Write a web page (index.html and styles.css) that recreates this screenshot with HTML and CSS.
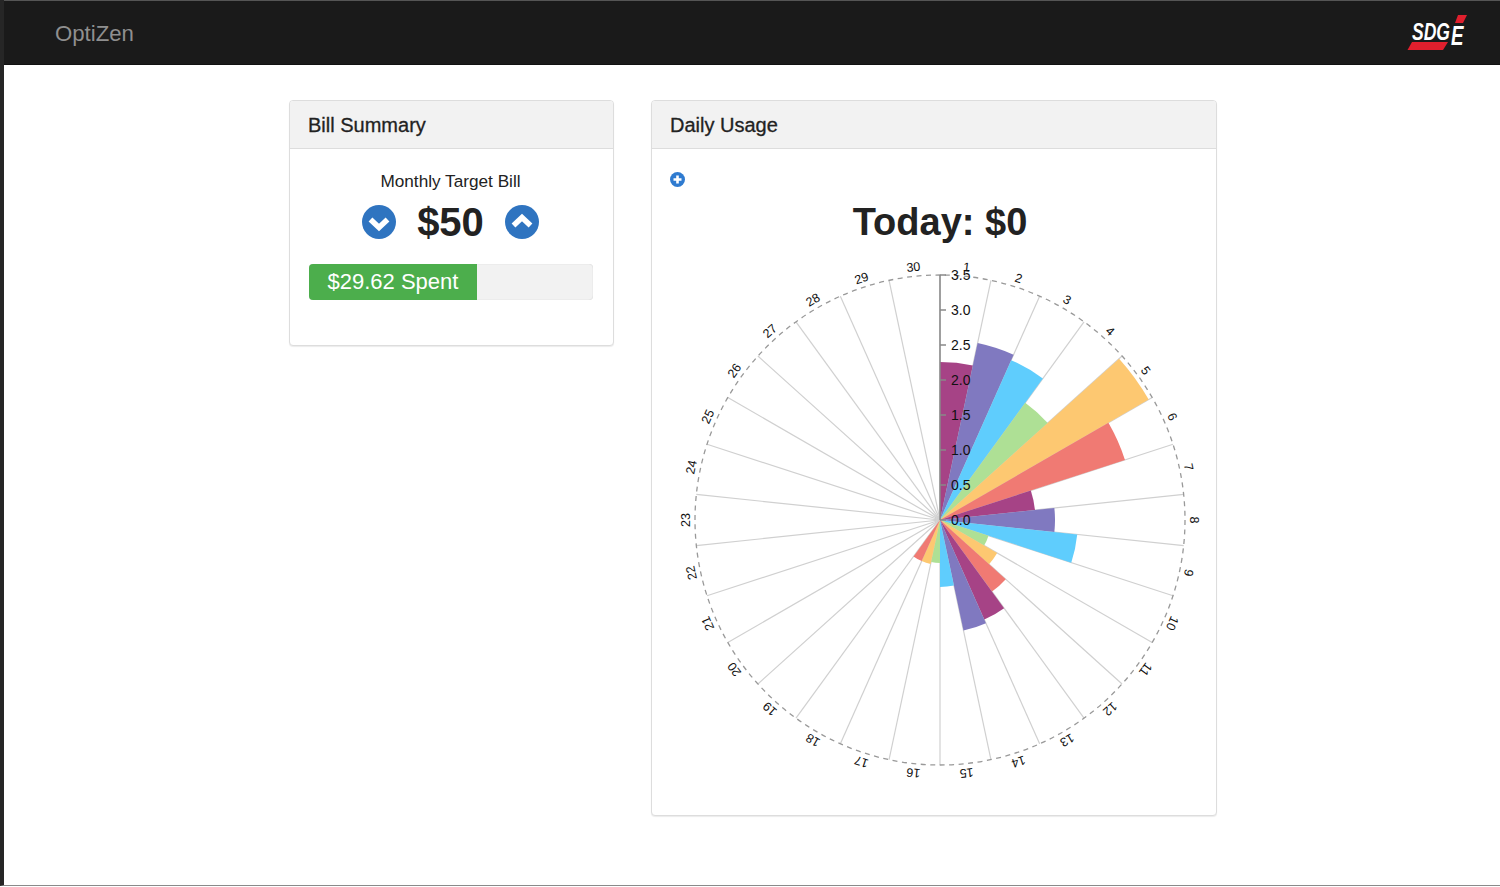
FILE: index.html
```html
<!DOCTYPE html>
<html lang="en">
<head>
    <meta charset="UTF-8">
    <meta name="viewport" content="width=device-width, initial-scale=1.0">
    <title>OptiZen</title>
    <link rel="stylesheet" href="styles.css">
</head>
<body>
    <div class="window">
        <nav class="navbar">
            <span class="brand">OptiZen</span>
            <svg class="logo" width="66" height="40" viewBox="0 0 66 40">
                <polygon class="logo-red" points="3.5,37 8,29 44,29 39,37" />
                <polygon class="logo-red" points="54,2 63,2 59,10 51,10" />
                <text class="logo-text" x="8" y="27" textLength="38" lengthAdjust="spacingAndGlyphs">SDG</text>
                <text class="logo-text logo-e" x="47" y="32" textLength="12.5" lengthAdjust="spacingAndGlyphs">E</text>
            </svg>
        </nav>

        <main class="content">
            <section class="panel panel-bill">
                <h3 class="panel-heading">Bill Summary</h3>
                <div class="panel-body bill-body">
                    <div class="target-label">Monthly Target Bill</div>
                    <div class="target-row">
                        <svg class="round-icon" width="34" height="34" viewBox="-17 -17 34 34">
                            <circle r="17" />
                            <path d="M-8.5 -2.5 L0 5.5 L8.5 -2.5" />
                        </svg>
                        <span class="target-amount">$50</span>
                        <svg class="round-icon" width="34" height="34" viewBox="-17 -17 34 34">
                            <circle r="17" />
                            <path d="M-8.5 3.5 L0 -4.5 L8.5 3.5" />
                        </svg>
                    </div>
                    <div class="progress">
                        <div class="progress-bar">$29.62 Spent</div>
                    </div>
                </div>
            </section>

            <section class="panel panel-usage">
                <h3 class="panel-heading">Daily Usage</h3>
                <div class="panel-body usage-body">
                    <svg class="plus-icon" width="15" height="15" viewBox="-7.5 -7.5 15 15">
                        <circle r="7.5" />
                        <path d="M-4 0 H4 M0 -4 V4" />
                    </svg>
                    <div class="usage-chart">
                        <h1 class="today">Today: $0</h1>
                        <svg id="polar" class="polar" width="540" height="540" viewBox="-270 -270 540 540"></svg>
                    </div>
                </div>
            </section>
        </main>
    </div>

    <script src="chart.js"></script>
</body>
</html>
```

FILE: styles.css
```css
html, body {
    margin: 0;
    background: white;
}

body {
    font-family: 'Liberation Sans', Arial, sans-serif;
    color: #222;
}

.window {
    box-sizing: border-box;
    height: 886px;
    overflow: hidden;
    border-left: 4px solid #262626;
    border-bottom: 1px solid #8a8a8a;
    background: white;
}

.navbar {
    box-sizing: border-box;
    height: 65px;
    display: flex;
    align-items: center;
    justify-content: space-between;
    padding: 0 30px 0 51px;
    background: #1a1a1a;
    border-top: 1px solid #555;
    border-bottom: 1px solid #111;
}

.brand {
    margin-top: 2px;
    color: #8f8f8f;
    font-size: 22.2px;
}

.logo-red {
    fill: #e01f2d;
}

.logo-text {
    fill: white;
    font-size: 23.7px;
    font-weight: bold;
    font-style: italic;
}

.logo-e {
    font-size: 27px;
}

.content {
    display: flex;
    align-items: flex-start;
    gap: 37px;
    padding: 35px 0 0 285px;
}

.panel {
    box-sizing: border-box;
    border: 1px solid #ddd;
    border-radius: 4px;
    box-shadow: 0 1px 1px rgba(0, 0, 0, 0.08);
    background: white;
}

.panel-bill {
    width: 325px;
    height: 246px;
}

.panel-usage {
    width: 566px;
    height: 716px;
}

.panel-heading {
    box-sizing: border-box;
    height: 48px;
    margin: 0;
    padding: 0 18px;
    line-height: 49px;
    font-size: 20px;
    font-weight: normal;
    -webkit-text-stroke: 0.3px #222;
    background: #f2f2f2;
    border-bottom: 1px solid #ddd;
    border-radius: 3px 3px 0 0;
}

.bill-body {
    padding: 22px 21px 0 19px;
    text-align: center;
}

.target-label {
    font-size: 17.2px;
    line-height: 20px;
}

.target-row {
    display: flex;
    align-items: center;
    justify-content: center;
    gap: 21px;
    margin-top: 8px;
    height: 46px;
}

.target-amount {
    font-size: 40px;
    font-weight: bold;
}

.round-icon circle {
    fill: #2f74c0;
}

.round-icon path {
    fill: none;
    stroke: white;
    stroke-width: 5.5;
}

.progress {
    height: 36px;
    margin: 19px -1px 0 0;
    background: #f2f2f2;
    border-radius: 4px;
    box-shadow: inset 0 0 1px rgba(0, 0, 0, 0.25);
    overflow: hidden;
}

.progress-bar {
    width: 168px;
    height: 36px;
    line-height: 36px;
    font-size: 22px;
    color: white;
    background: #4cae4c;
}

.usage-body {
    padding: 23px 0 0 18px;
}

.plus-icon {
    display: block;
}

.plus-icon circle {
    fill: #2f7bd0;
}

.plus-icon path {
    stroke: white;
    stroke-width: 2.6;
}

.usage-chart {
    width: 540px;
}

.today {
    margin: 0;
    height: 62px;
    padding-top: 12px;
    line-height: 46px;
    text-align: center;
    font-size: 38px;
    font-weight: bold;
    box-sizing: border-box;
}

.polar {
    display: block;
    margin-top: 1px;
}

.spoke {
    stroke: #d0d0d0;
    stroke-width: 1.2;
}

.rim {
    fill: none;
    stroke: #999;
    stroke-width: 1.3;
    stroke-dasharray: 5 4.5;
}

.axis {
    fill: none;
    stroke: #888;
    stroke-width: 1.5;
}

.day-label {
    font-size: 12.5px;
    fill: #111;
    text-anchor: middle;
    dominant-baseline: central;
}

.tick-label {
    font-size: 14px;
    fill: #111;
    dominant-baseline: central;
}
```

FILE: chart.js
```js
const svg = document.getElementById("polar");
const NS = "http://www.w3.org/2000/svg";
const R = 245;
const DAYS = 30;
const STEP = 360 / DAYS;

// outer radius of each day's wedge, in px, read off as usage * 70
const usage = [158, 181, 175, 145, 241, 194.5, 95.5, 115, 138, 51, 66, 88.5, 109, 113, 67, 43, 45, 45];
const colors = ["#a64386", "#8079c0", "#5fcdfd", "#aee095", "#fdc871", "#f07a73"];

function add(tag, attrs, text) {
    const el = document.createElementNS(NS, tag);
    for (const k in attrs) el.setAttribute(k, attrs[k]);
    if (text) el.textContent = text;
    svg.appendChild(el);
    return el;
}

function point(r, deg) {
    const a = deg * Math.PI / 180;
    return [(r * Math.sin(a)).toFixed(2), (-r * Math.cos(a)).toFixed(2)];
}

for (let i = 0; i < DAYS; i++) {
    const [x, y] = point(R, i * STEP);
    add("line", { class: "spoke", x1: 0, y1: 0, x2: x, y2: y });
}

usage.forEach((r, i) => {
    const [x1, y1] = point(r, i * STEP);
    const [x2, y2] = point(r, (i + 1) * STEP);
    add("path", {
        d: `M0 0 L${x1} ${y1} A${r} ${r} 0 0 1 ${x2} ${y2} Z`,
        fill: colors[i % colors.length],
    });
});

add("circle", { class: "rim", r: R });

for (let i = 0; i < DAYS; i++) {
    const deg = (i + 0.5) * STEP;
    const [x, y] = point(254, deg);
    add("text", {
        class: "day-label",
        x: x,
        y: y,
        transform: `rotate(${deg} ${x} ${y})`,
    }, String(i + 1));
}

add("path", { class: "axis", d: `M0 0 V${-R}` });
for (let v = 0; v <= 7; v++) {
    const y = -v * 35;
    add("line", { class: "axis", x1: 0, y1: y, x2: 6, y2: y });
    add("text", { class: "tick-label", x: 11, y: y }, (v / 2).toFixed(1));
}
```
